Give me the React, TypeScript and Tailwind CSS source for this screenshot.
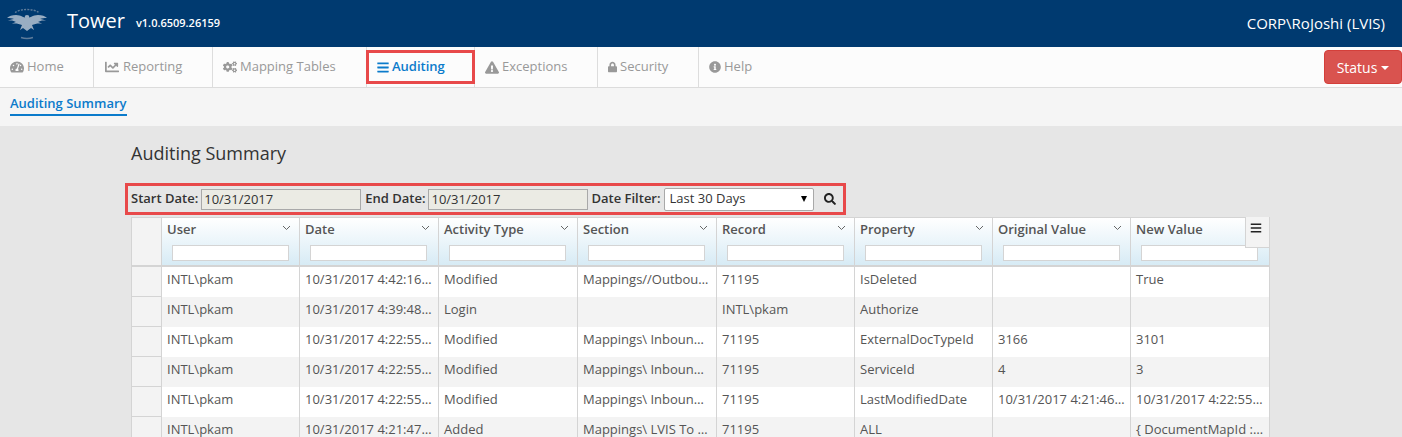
import React from 'react';
import { FaTachometerAlt, FaChartLine, FaCogs, FaBars, FaExclamationTriangle, FaLock, FaInfoCircle, FaSearch } from 'react-icons/fa';

const navItems = [
  { label: 'Home', icon: FaTachometerAlt, width: 'w-[94px]', iconClass: 'w-[14px] h-[14px]' },
  { label: 'Reporting', icon: FaChartLine, width: 'w-[119px]', iconClass: 'w-[16px] h-[14px]' },
  { label: 'Mapping Tables', icon: FaCogs, width: 'w-[154px]', iconClass: 'w-[14px] h-[14px]' },
  { label: 'Auditing', icon: FaBars, width: 'w-[108px]', iconClass: 'w-[12px] h-[13px]', active: true },
  { label: 'Exceptions', icon: FaExclamationTriangle, width: 'w-[123px]', iconClass: 'w-[14px] h-[13px]' },
  { label: 'Security', icon: FaLock, width: 'w-[101px]', iconClass: 'w-[9px] h-[12px]' },
  { label: 'Help', icon: FaInfoCircle, width: 'w-[100px]', iconClass: 'w-[12px] h-[12px]', last: true },
];

const columns = ['User', 'Date', 'Activity Type', 'Section', 'Record', 'Property', 'Original Value', 'New Value'];

const rows = [
  ['INTL\\pkam', '10/31/2017 4:42:16 PM', 'Modified', 'Mappings//Outbound Document', '71195', 'IsDeleted', '', 'True'],
  ['INTL\\pkam', '10/31/2017 4:39:48 PM', 'Login', '', 'INTL\\pkam', 'Authorize', '', ''],
  ['INTL\\pkam', '10/31/2017 4:22:55 PM', 'Modified', 'Mappings\\ Inbound Document', '71195', 'ExternalDocTypeId', '3166', '3101'],
  ['INTL\\pkam', '10/31/2017 4:22:55 PM', 'Modified', 'Mappings\\ Inbound Document', '71195', 'ServiceId', '4', '3'],
  ['INTL\\pkam', '10/31/2017 4:22:55 PM', 'Modified', 'Mappings\\ Inbound Document', '71195', 'LastModifiedDate', '10/31/2017 4:21:46 PM', '10/31/2017 4:22:55 PM'],
  ['INTL\\pkam', '10/31/2017 4:21:47 PM', 'Added', 'Mappings\\ LVIS To Document', '71195', 'ALL', '', '{ DocumentMapId : 71195 }'],
];

const gridCols = 'grid grid-cols-[31px_138px_139px_139px_139px_138px_138px_138px_139px]';

const Logo = () => (
  <svg width="42" height="34" viewBox="0 0 42 34" className="ml-[6px] opacity-85" fill="#b4c2d1">
    <path d="M21 12c-2-1-6-4-11-4-4 0-7 1-9 3 3 0 5 0 7 1-2 0-5 1-6 2 3-1 6 0 8 1-1 0-3 1-4 2 3-1 7 0 10 1l-2 5 3-2 4 3 4-3 3 2-2-5c3-1 7-2 10-1-1-1-3-2-4-2 2-1 5-2 8-1-1-1-4-2-6-2 2-1 4-1 7-1-2-2-5-3-9-3-5 0-9 3-11 4z" />
    <circle cx="21" cy="10.500" r="2.400" />
    <path d="M9 5.500C15 1.500 27 1.500 33 5.500" fill="none" stroke="#6f88a3" strokeWidth="1.400" strokeDasharray="2 1.200" />
    <path d="M15 30.500c4 1.300 8 1.300 12 0" fill="none" stroke="#6f88a3" strokeWidth="1.400" />
  </svg>
);

export default function App() {
  return (
    <div className="h-[437px] overflow-hidden bg-[#e6e6e6] font-['Open_Sans',sans-serif] text-[13px] text-[#555]">
      <header className="flex h-[47px] items-center justify-between bg-[#003a70] text-white">
        <div className="flex items-center">
          <Logo />
          <span className="mb-[6px] ml-[19px] text-[20px] leading-none">Tower</span>
          <span className="mb-[2px] ml-[11px] text-[11px] font-semibold leading-none">v1.0.6509.26159</span>
        </div>
        <span className="mb-[1px] mr-[17px] text-[15px]">CORP\RoJoshi (LVIS)</span>
      </header>

      <nav className="flex h-[41px] items-stretch justify-between border-b border-[#dcdcdc] bg-[#fcfcfc]">
        <div className="flex">
          {navItems.map(({ label, icon: Icon, width, iconClass, active, last }) => (
            <div key={label} className={`relative ${width}`}>
              <div className={`flex h-full items-center gap-[3px] pl-[10px] text-[13px] ${last ? '' : 'border-r border-[#dddddd]'} ${active ? 'font-semibold text-[#0b7bcb]' : 'text-[#999]'}`}>
                <Icon className={iconClass} />
                <span>{label}</span>
              </div>
              {active && <div className="absolute -left-[1px] right-0 top-[3px] h-[34px] border-[3px] border-[#e8494a]" />}
            </div>
          ))}
        </div>
        <button className="mt-[3px] flex h-[34px] w-[78px] items-center justify-center gap-[4px] rounded-[4px] border border-[#d43f3a] bg-[#d9534f] text-[14px] text-white">
          Status
          <span className="mt-[2px] border-x-[4px] border-t-[4px] border-x-transparent border-t-white" />
        </button>
      </nav>

      <div className="h-[38px] bg-[#f5f5f5] pl-[10px] pt-[6px]">
        <span className="inline-block h-[22px] border-b-2 border-[#0b7bcb] text-[13px] font-semibold leading-[18px] text-[#0b7bcb]">Auditing Summary</span>
      </div>

      <main className="pl-[125px]">
        <h1 className="pl-[6px] pt-[15px] text-[18px] leading-[24px] text-[#333]">Auditing Summary</h1>

        <div className="mt-[18px] flex h-[32px] w-[721px] items-center border-[3px] border-[#e8494a] pl-[3px] text-[13px] font-semibold text-[#333]">
          <label>Start Date:</label>
          <input disabled value="10/31/2017" className="ml-[3px] h-[21px] w-[160px] border border-[#a9a9a9] bg-[#ebebe4] px-[2px] text-[13px] font-normal text-[#333]" />
          <label className="ml-[4px]">End Date:</label>
          <input disabled value="10/31/2017" className="ml-[3px] h-[21px] w-[160px] border border-[#a9a9a9] bg-[#ebebe4] px-[2px] text-[13px] font-normal text-[#333]" />
          <label className="ml-[3px]">Date Filter:</label>
          <div className="ml-[3px] flex h-[23px] w-[150px] items-center justify-between rounded-[2px] border border-[#a9a9a9] bg-white pl-[5px] pr-[6px] font-normal">
            <span>Last 30 Days</span>
            <span className="border-x-[3.5px] border-t-[6px] border-x-transparent border-t-black" />
          </div>
          <FaSearch size={12} className="ml-[10px] text-[#222]" />
        </div>

        <div className="relative ml-[6px] mt-[2px] w-[1139px] border-t border-[#d4d4d4]">
          <div className={`${gridCols} h-[49px] border-b-2 border-[#d4d4d4]`}>
            <div className="border-x border-[#d4d4d4] bg-[#f3f3f3]" />
            {columns.map((col) => (
              <div key={col} className="relative border-r border-[#d4d4d4] bg-gradient-to-b from-white to-[#d7ebf5] px-[5px] pt-[3px]">
                <div className="flex items-center justify-between pr-[3px]">
                  <span className="text-[13px] font-semibold leading-[17px] text-[#555]">{col}</span>
                  <svg width="9" height="6" viewBox="0 0 9 6" className="mb-[3px]" fill="none" stroke="#666" strokeWidth="1">
                    <path d="M1 1l3.500 3.500L8 1" />
                  </svg>
                </div>
                <div className="ml-[5px] mt-[7px] h-[16px] w-[117px] border border-[#d4d4d4] bg-white" />
              </div>
            ))}
          </div>
          {rows.map((row, i) => (
            <div key={i} className={`${gridCols} h-[30px] ${i % 2 ? 'bg-[#f3f3f3]' : 'bg-white'}`}>
              <div className="border-x border-b border-[#d4d4d4] bg-[#f3f3f3]" />
              {row.map((cell, j) => (
                <div key={j} className="truncate border-r border-[#d4d4d4] px-[5px] text-[13px] leading-[25px] text-[#555]">{cell}</div>
              ))}
            </div>
          ))}
          <button className="absolute -top-[1px] right-0 flex h-[31px] w-[25px] items-start justify-center border-x border-b border-[#d4d4d4] bg-[#f3f3f3] pr-[3px] pt-[5px] text-[#222]">
            <FaBars size={12} />
          </button>
        </div>
      </main>
    </div>
  );
}
